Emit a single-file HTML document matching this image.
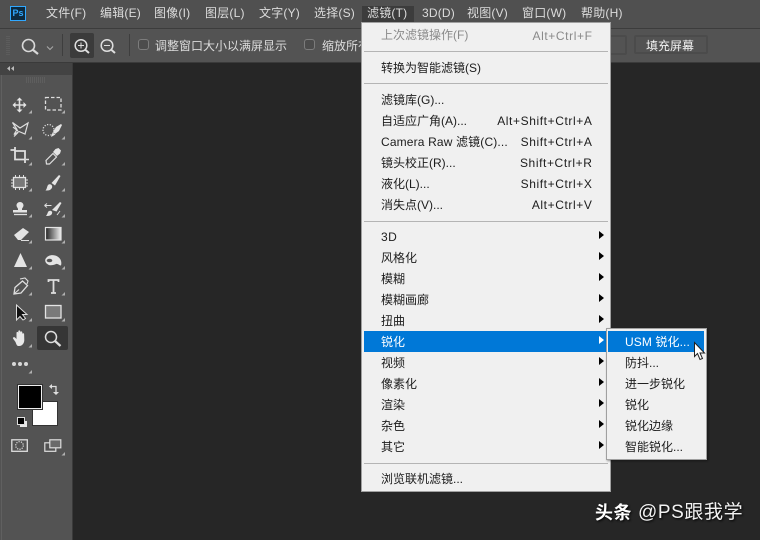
<!DOCTYPE html>
<html lang="zh"><head><meta charset="utf-8"><title>Photoshop</title>
<style>
html,body{margin:0;padding:0;width:760px;height:540px;overflow:hidden;background:#262626}
body{position:relative;font:12px/16px "Liberation Sans","Noto Sans CJK SC",sans-serif;color:#d6d6d6}
div,span.a{position:absolute}
.t{position:absolute;white-space:nowrap;letter-spacing:0;transform:translateY(-50%)}
.m{color:#dcdcdc;letter-spacing:.2px}
.d{color:#1c1c1c}
.r{position:absolute;white-space:nowrap;letter-spacing:.6px;transform:translateY(-50%);right:167.500px;color:#1c1c1c}
.sep{left:364px;width:244px;height:1px;background:#b4b4b4}
.tri{left:599px;width:0;height:0;border-left:5px solid #000;border-top:4.500px solid transparent;border-bottom:4.500px solid transparent}
svg{position:absolute;left:0;top:0}
</style></head><body>
<!-- menu bar -->
<div style="left:0;top:0;width:760px;height:28px;background:#505050"></div>
<div style="left:0;top:28px;width:760px;height:1px;background:#3c3c3c"></div>
<div style="left:0;top:29px;width:760px;height:33px;background:#535353"></div>
<div style="left:0;top:62px;width:760px;height:1px;background:#3a3a3a"></div>
<div style="left:362px;top:6px;width:52px;height:17px;background:#3c3c3c"></div>
<div style="left:10px;top:6px;width:14px;height:13px;background:#0d2a3f;border:1px solid #31a8ff;color:#31a8ff;font:bold 9px/13px 'Liberation Sans',sans-serif;text-align:center">Ps</div>
<span class="t m" style="left:46px;top:13px">文件(F)</span>
<span class="t m" style="left:100px;top:13px">编辑(E)</span>
<span class="t m" style="left:154px;top:13px">图像(I)</span>
<span class="t m" style="left:205px;top:13px">图层(L)</span>
<span class="t m" style="left:259px;top:13px">文字(Y)</span>
<span class="t m" style="left:314px;top:13px">选择(S)</span>
<span class="t m" style="left:367px;top:13px">滤镜(T)</span>
<span class="t m" style="left:422px;top:13px">3D(D)</span>
<span class="t m" style="left:467px;top:13px">视图(V)</span>
<span class="t m" style="left:522px;top:13px">窗口(W)</span>
<span class="t m" style="left:581px;top:13px">帮助(H)</span>
<!-- options bar -->
<div style="left:70px;top:33px;width:24px;height:25px;background:#3b3b3b;border-radius:2px"></div>
<div style="left:62px;top:34px;width:1px;height:22px;background:#3e3e3e"></div>
<div style="left:129px;top:34px;width:1px;height:22px;background:#3e3e3e"></div>
<div style="left:138px;top:39px;width:9px;height:9px;border:1px solid #7c7c7c;border-radius:3px;background:#4c4c4c"></div>
<span class="t m" style="left:155px;top:46px;letter-spacing:0">调整窗口大小以满屏显示</span>
<div style="left:304px;top:39px;width:9px;height:9px;border:1px solid #7c7c7c;border-radius:3px;background:#4c4c4c"></div>
<span class="t m" style="left:322px;top:46px;letter-spacing:0">缩放所有窗口</span>
<div style="left:590px;top:35px;width:33px;height:16px;border:2px solid #4b4b4b;background:#535353;border-radius:2px"></div>
<div style="left:634px;top:35px;width:70px;height:15px;border:2px solid #4b4b4b;background:#535353;border-radius:2px"></div>
<span class="t" style="left:646px;top:46px;color:#f2f2f2">填充屏幕</span>
<!-- left panel -->
<div style="left:0;top:63px;width:72px;height:477px;background:#535353"></div>
<div style="left:0;top:63px;width:72px;height:12px;background:#434343"></div>
<div style="left:72px;top:63px;width:1px;height:477px;background:#3a3a3a"></div>
<div style="left:1px;top:75px;width:1px;height:465px;background:#606060"></div>
<div style="left:37px;top:326px;width:31px;height:24px;background:#363636;border-radius:2px"></div>
<!-- foreground/background colours -->
<div style="left:32px;top:401px;width:24px;height:23px;background:#fff;border:1px solid #333"></div>
<div style="left:18px;top:385px;width:22px;height:22px;background:#000;border:1px solid #eee;outline:1px solid #333"></div>
<div style="left:20px;top:421px;width:7px;height:6px;background:#e8e8e8"></div>
<div style="left:17px;top:417px;width:6px;height:6px;background:#000;border:1px solid #ddd"></div>
<svg width="760" height="540" viewBox="0 0 760 540" fill="none" stroke="#dedede" stroke-width="1.5">
<!-- options icons -->
<g stroke="#d8d8d8"><circle cx="28.500" cy="45.500" r="6" stroke-width="1.600"/><path d="M32.500 49.500l5.500 4.500" stroke-width="2.200"/></g>
<path d="M47 46.500l3 3 3-3" stroke="#aaa" stroke-width="1"/>
<circle cx="81" cy="45.500" r="5.800"/><path d="M85 49.500l4 3.500" stroke-width="2"/><path d="M78 45.500h6M81 42.500v6" stroke-width="1"/>
<circle cx="107" cy="45.500" r="5.800"/><path d="M111 49.500l4 3.500" stroke-width="2"/><path d="M104 45.500h6" stroke-width="1"/>
<path d="M7 36v20M9 36v20" stroke="#666" stroke-width="1" stroke-dasharray="1 1"/>
<!-- panel collapse -->
<path d="M10 66l-3 2.500 3 2.500zM14 66l-3 2.500 3 2.500z" fill="#bbb" stroke="none"/>
<path d="M26 78h20M26 80h20M26 82h20" stroke="#6a6a6a" stroke-width="1" stroke-dasharray="1 1"/>
<!-- move -->
<path d="M14 105h11M19.500 99.500v11" stroke-width="1.600"/><path d="M19.500 97.500l-3 3h6zM19.500 112.500l-3-3h6zM12.500 105l3-3v6zM26.500 105l-3-3v6z" fill="#e4e4e4" stroke="none"/>
<!-- marquee -->
<rect x="45.500" y="97.500" width="15.500" height="12.500" stroke-dasharray="3.500 2" stroke-width="1.300"/>
<!-- lasso polygon -->
<path d="M12.500 122.500l7.500 5.500 8-5-3 11-6-2.500-5 3 3-5z" stroke-width="1.200"/><path d="M18 132.500l-4 4M13 127l5 4" stroke-width="1.200"/>
<!-- quick selection -->
<circle cx="48.500" cy="130" r="5.500" stroke-dasharray="1.200 1.500" stroke-width="1.300"/><path d="M53 132l3-5 5-3 1 1-3 6-4 3z" fill="#e4e4e4" stroke="none"/><path d="M51 137l1.500-4 3 1.500z" fill="#e4e4e4" stroke="none"/>
<!-- crop -->
<path d="M10.500 150h4M15 147v12.500h10M15 151h10v12" stroke-width="1.800"/><path d="M26 159.500h3" stroke-width="1.500"/>
<!-- eyedropper -->
<path d="M46.500 164l-.5-3.500 7-7 3.500 3.500-7 7z" stroke-width="1.200"/><path d="M53 152l2.500-3 3-1 2.500 2.500-1 3-3 2.500z" fill="#e4e4e4" stroke="none"/>
<!-- healing patch -->
<rect x="13.500" y="177.500" width="12" height="10" fill="#7a7a7a" stroke="#e4e4e4" stroke-width="1.300"/><path d="M15.500 175v2M19.500 175v2M23.500 175v2M15.500 188v2M19.500 188v2M23.500 188v2M11 180h2M11 183h2M11 186h2M26 180h2M26 183h2M26 186h2" stroke-width="1"/>
<!-- brush -->
<path d="M51.500 183l7.500-8 1.500 1-5.500 9.500z" fill="#e4e4e4" stroke="none"/><path d="M45.500 190.500c2.500 0 4.500 0 5.500-1.500 1.500-1 1.500-3 .5-4-1-1-2.500-1-3.500 0-1 1.500-1 4-2.500 5.500z" fill="#e4e4e4" stroke="none"/>
<!-- stamp -->
<path d="M18 209c0-1-1.500-2-1.500-3.500 0-2 1.500-3.500 3.500-3.500s3.500 1.500 3.500 3.500c0 1.500-1.500 2.500-1.500 3.500v1h5v2.500h-14v-2.500h5z" fill="#e4e4e4" stroke="none"/><path d="M14 214.500h13" stroke-width="1.300"/>
<!-- history brush -->
<path d="M52 210l8-8 1.500 1-5 8.500z" fill="#e4e4e4" stroke="none"/><path d="M46 216c2 0 4 0 5.500-1.500 1-1.500 1-3-.5-3.500-1-.5-2.500 0-3 1-.5 1.500-1 2.500-2 4z" fill="#e4e4e4" stroke="none"/><path d="M44.500 205.500h7M44.500 205.500l2.500-2M44.500 205.500l2.500 2M57 215l3-4" stroke-width="1"/>
<!-- eraser -->
<path d="M14 235l9-7 6 4-8 8h-3z" fill="#e4e4e4" stroke="none"/><path d="M21 240.500h8" stroke-width="1"/>
<!-- gradient -->
<defs><linearGradient id="g"><stop offset="0" stop-color="#222"/><stop offset="1" stop-color="#f0f0f0"/></linearGradient></defs>
<rect x="45.500" y="227.500" width="15.500" height="12.500" fill="url(#g)" stroke="#e4e4e4" stroke-width="1.200"/>
<!-- triangle shape -->
<path d="M20.500 253l6.500 14h-13z" fill="#e4e4e4" stroke="none"/>
<!-- smudge/blob -->
<path d="M45.500 259c2-4 8-5 12-2.500 3.500 2 4.500 6 3.500 9-2 0-3-2-5-1.500-2 1-6 2-8 .5-2-1-3.500-3.500-2.500-5.500z" fill="#e4e4e4" stroke="none"/><ellipse cx="49.500" cy="260.500" rx="2.800" ry="1.800" fill="#535353" stroke="none"/>
<!-- pen -->
<path d="M14 294l1-6.500 7.500-6.500 5 4.500-6.500 7.500z" stroke-width="1.300"/><path d="M14 294l5-4.500M20 279l5-1 3 3-1 3" stroke-width="1.100"/>
<!-- type -->
<path d="M48.500 282v-2h10v2M53.500 280v12.500M51 293h5" stroke-width="1.800"/>
<!-- path select -->
<path d="M16.500 305v15l3.500-3.500 3 3.500 2.500-1.500-3-4h4.500z" fill="#111" stroke="#ddd" stroke-width="1"/>
<!-- rectangle -->
<rect x="45.500" y="305.500" width="15.500" height="12.500" fill="#7a7a7a" stroke="#e4e4e4" stroke-width="1.300"/>
<!-- hand -->
<path d="M15.500 342l-2.500-3.500c-.5-1 1-2 2-1l1.500 1.500v-6c0-1.500 1.800-1.500 1.800 0v-1.500c0-1.500 2-1.500 2 0v1c0-1.500 2-1.500 2 0v1.500c0-1 1.800-1 1.800 0l.2 6c0 3-2 6-5 6h-1c-1.500 0-2-2-2.800-4z" fill="#e8e8e8" stroke="none"/>
<!-- zoom -->
<circle cx="51" cy="337" r="5.500" stroke-width="1.500"/><path d="M55 341l5.500 5" stroke-width="2.200"/>
<!-- dots -->
<g fill="#d8d8d8" stroke="none"><circle cx="14" cy="364" r="2"/><circle cx="20" cy="364" r="2"/><circle cx="26" cy="364" r="2"/></g>
<!-- swap -->
<path d="M51 386.500h5v6" stroke-width="1.300"/><path d="M49 386.500l3-2.500v5zM56 395l-3-3h6z" fill="#dedede" stroke="none"/>
<!-- quick mask -->
<rect x="11.800" y="439.800" width="15.500" height="11.500" stroke-width="1.300"/><circle cx="19.500" cy="445.500" r="3.800" stroke-width="1.200" stroke-dasharray="1.200 1.200"/>
<!-- screen mode -->
<rect x="44.800" y="442.800" width="11" height="8.500" stroke-width="1.200"/><rect x="49.800" y="439.800" width="11" height="8" fill="#6a6a6a" stroke-width="1.200"/>
<!-- corner ticks -->
<g fill="#b0b0b0" stroke="none">
<path d="M32 110v3.500h-3.500zM65 110v3.500h-3.500zM32 136v3.500h-3.500zM65 136v3.500h-3.500zM32 162v3.500h-3.500zM65 162v3.500h-3.500zM32 188v3.500h-3.500zM65 188v3.500h-3.500zM32 214v3.500h-3.500zM65 214v3.500h-3.500zM32 240v3.500h-3.500zM65 240v3.500h-3.500zM32 266v3.500h-3.500zM65 266v3.500h-3.500zM32 292v3.500h-3.500zM65 292v3.500h-3.500zM32 318v3.500h-3.500zM65 318v3.500h-3.500zM32 344v3.500h-3.500zM32 370v3.500h-3.500zM65 452v3.500h-3.500z"/></g>
</svg>
<!-- main menu -->
<div style="left:361px;top:22px;width:248px;height:468px;background:#f0f0f0;border:1px solid #a0a0a0"></div>
<div style="left:364px;top:331px;width:243px;height:21px;background:#0078d7"></div>
<span class="t" style="left:381px;top:35px;color:#8a8a8a">上次滤镜操作(F)</span><span class="r" style="top:36px;color:#8a8a8a">Alt+Ctrl+F</span>
<div class="sep" style="top:51px"></div>
<span class="t d" style="left:381px;top:68px">转换为智能滤镜(S)</span>
<div class="sep" style="top:83px"></div>
<span class="t d" style="left:381px;top:100px">滤镜库(G)...</span>
<span class="t d" style="left:381px;top:121px">自适应广角(A)...</span><span class="r" style="top:121px">Alt+Shift+Ctrl+A</span>
<span class="t d" style="left:381px;top:142px;letter-spacing:.15px">Camera Raw 滤镜(C)...</span><span class="r" style="top:142px">Shift+Ctrl+A</span>
<span class="t d" style="left:381px;top:163px">镜头校正(R)...</span><span class="r" style="top:163px">Shift+Ctrl+R</span>
<span class="t d" style="left:381px;top:184px">液化(L)...</span><span class="r" style="top:184px">Shift+Ctrl+X</span>
<span class="t d" style="left:381px;top:205px">消失点(V)...</span><span class="r" style="top:205px">Alt+Ctrl+V</span>
<div class="sep" style="top:221px"></div>
<span class="t d" style="left:381px;top:237px;letter-spacing:.4px">3D</span><div class="tri" style="top:231px"></div>
<span class="t d" style="left:381px;top:258px">风格化</span><div class="tri" style="top:252px"></div>
<span class="t d" style="left:381px;top:279px">模糊</span><div class="tri" style="top:273px"></div>
<span class="t d" style="left:381px;top:300px">模糊画廊</span><div class="tri" style="top:294px"></div>
<span class="t d" style="left:381px;top:321px">扭曲</span><div class="tri" style="top:315px"></div>
<span class="t" style="left:381px;top:342px;color:#fff">锐化</span><div class="tri" style="top:336px;border-left-color:#fff"></div>
<span class="t d" style="left:381px;top:363px">视频</span><div class="tri" style="top:357px"></div>
<span class="t d" style="left:381px;top:384px">像素化</span><div class="tri" style="top:378px"></div>
<span class="t d" style="left:381px;top:405px">渲染</span><div class="tri" style="top:399px"></div>
<span class="t d" style="left:381px;top:426px">杂色</span><div class="tri" style="top:420px"></div>
<span class="t d" style="left:381px;top:447px">其它</span><div class="tri" style="top:441px"></div>
<div class="sep" style="top:463px"></div>
<span class="t d" style="left:381px;top:479px">浏览联机滤镜...</span>
<!-- submenu -->
<div style="left:606px;top:328px;width:99px;height:130px;background:#f0f0f0;border:1px solid #a0a0a0;box-shadow:1px 1px 2px rgba(0,0,0,.4)"></div>
<div style="left:608px;top:331px;width:96px;height:21px;background:#0078d7"></div>
<span class="t" style="left:625px;top:342px;color:#fff;letter-spacing:.1px">USM 锐化...</span>
<span class="t d" style="left:625px;top:363px">防抖...</span>
<span class="t d" style="left:625px;top:384px">进一步锐化</span>
<span class="t d" style="left:625px;top:405px">锐化</span>
<span class="t d" style="left:625px;top:426px">锐化边缘</span>
<span class="t d" style="left:625px;top:447px">智能锐化...</span>
<!-- mouse cursor -->
<svg width="760" height="540" viewBox="0 0 760 540"><path d="M694.500 342.500v14l3-3 2.500 6 2.500-1-2.500-5.500h4.500z" fill="#fff" stroke="#222" stroke-width="1"/></svg>
<!-- watermark -->
<span class="t" style="left:595px;top:513px;color:#fff;font-size:18px;font-weight:bold;letter-spacing:.5px;text-shadow:1px 1px 2px #000">头条</span>
<span class="t" style="left:638px;top:513px;color:#f2f2f2;font-size:19px;letter-spacing:.6px;text-shadow:1px 1px 2px #000">@PS跟我学</span>
</body></html>
